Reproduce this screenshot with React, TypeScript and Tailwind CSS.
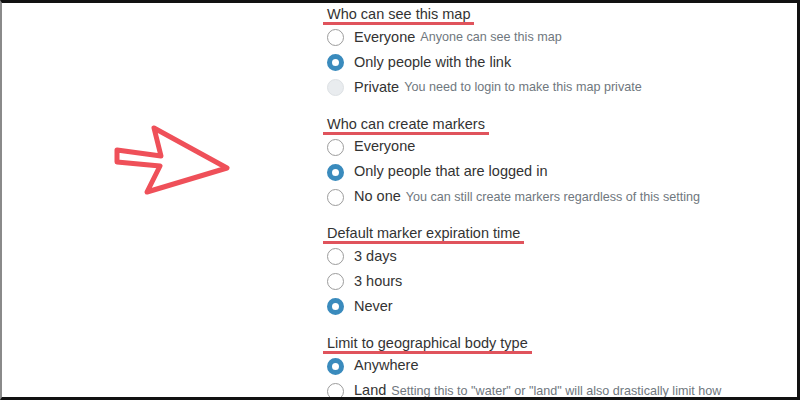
import React from "react";

type Choice = {
  label: string;
  note?: string;
  state?: "checked" | "disabled";
};

type Section = {
  title: string;
  choices: Choice[];
};

const sections: Section[] = [
  {
    title: "Who can see this map",
    choices: [
      { label: "Everyone", note: "Anyone can see this map" },
      { label: "Only people with the link", state: "checked" },
      { label: "Private", note: "You need to login to make this map private", state: "disabled" },
    ],
  },
  {
    title: "Who can create markers",
    choices: [
      { label: "Everyone" },
      { label: "Only people that are logged in", state: "checked" },
      { label: "No one", note: "You can still create markers regardless of this setting" },
    ],
  },
  {
    title: "Default marker expiration time",
    choices: [{ label: "3 days" }, { label: "3 hours" }, { label: "Never", state: "checked" }],
  },
  {
    title: "Limit to geographical body type",
    choices: [
      { label: "Anywhere", state: "checked" },
      { label: "Land", note: 'Setting this to "water" or "land" will also drastically limit how' },
    ],
  },
];

const Radio = ({ state }: { state?: Choice["state"] }) => {
  if (state === "checked") {
    return <span className="w-[17px] h-[17px] rounded-full border-[5px] border-[#3a8bbd] bg-white shrink-0" />;
  }
  if (state === "disabled") {
    return <span className="w-[17px] h-[17px] rounded-full border border-[#dde1e4] bg-[#e9ecef] shrink-0" />;
  }
  return <span className="w-[17px] h-[17px] rounded-full border border-[#9c9c9c] bg-white shrink-0" />;
};

const Arrow = () => (
  <svg width="130" height="90" viewBox="108 118 130 90" className="block ml-[106px] mt-[115px]">
    <polygon
      points="117,150 161,156 154,128 227,168 147,192 160,166 117,162"
      fill="none"
      stroke="#ef5059"
      strokeWidth="5"
      strokeLinejoin="round"
    />
  </svg>
);

export default function App() {
  return (
    <div className="w-[800px] h-[400px] overflow-hidden bg-white flex border-t-[3px] border-r-[3px] border-b-[3px] border-l-2 border-t-[#111] border-r-[#111] border-b-[#111] border-l-[#8a8a8a] font-['Liberation_Sans',Arial,sans-serif]">
      <div className="w-[321px] shrink-0">
        <Arrow />
      </div>

      <div className="flex flex-col">
        {sections.map((section, i) => (
          <div key={section.title} className={i === 0 ? "mt-[4px]" : "mt-[16.5px]"}>
            <div className="flex">
              <span className="px-1 text-[14.5px] leading-[15px] text-[#333] border-b-[3px] border-[#e0535c]">
                {section.title}
              </span>
            </div>
            {section.choices.map((c) => (
              <div key={c.label} className="h-[25px] flex items-center pl-[4px]">
                <Radio state={c.state} />
                <span className="ml-[10px] text-[14.5px] text-[#333] whitespace-nowrap">{c.label}</span>
                {c.note && (
                  <span className="ml-[5px] text-[12.6px] text-[#6f777e] whitespace-nowrap">{c.note}</span>
                )}
              </div>
            ))}
          </div>
        ))}
      </div>
    </div>
  );
}
